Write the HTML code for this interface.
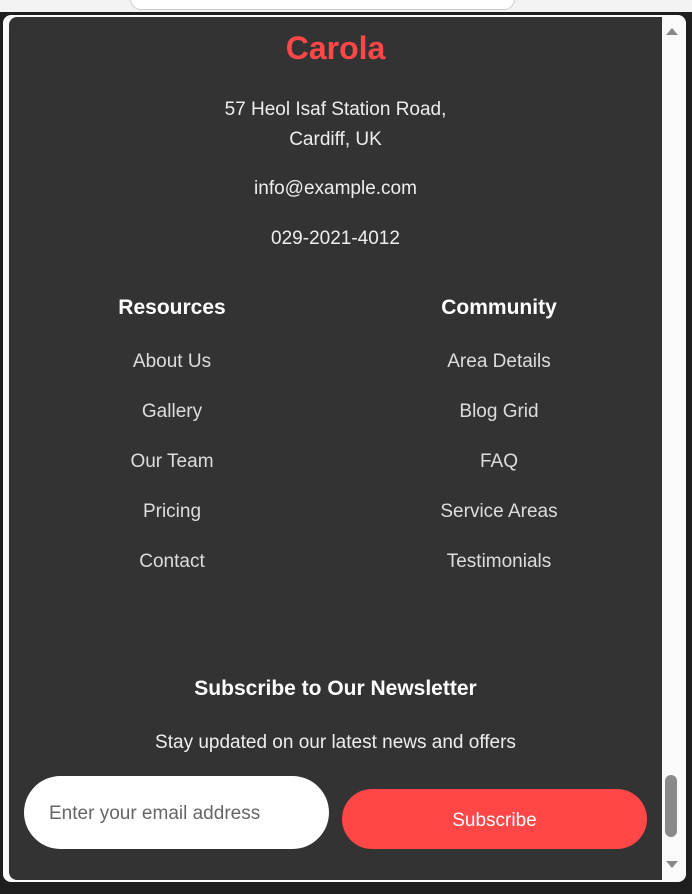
<!DOCTYPE html>
<html><head><style>
*{margin:0;padding:0;box-sizing:border-box}
body{width:692px;height:894px;background:#1e1e1e;position:relative;overflow:hidden;font-family:"Liberation Sans",sans-serif}
.top{position:absolute;left:0;top:0;width:692px;height:12px;background:#f3f3f3}
.url{position:absolute;left:130px;top:-12px;width:385px;height:22px;border:1px solid #ccc;border-radius:12px;background:#fff}
.frame{position:absolute;left:3px;top:15px;width:683px;height:867px;background:#fafafa;border-radius:8px}
.panel{position:absolute;left:9px;top:17px;width:653px;height:863px;background:#333;border-radius:8px 0 0 8px;color:#fff;text-align:center}
.sb{position:absolute;left:665px;top:775px;width:12px;height:62px;background:#8a8a8a;border-radius:6px}
.arr{position:absolute;left:666px;width:0;height:0;border-left:6px solid transparent;border-right:6px solid transparent}
.t{position:absolute;left:0;width:100%;font-size:19px;color:#eee}
.col{position:absolute;width:200px;text-align:center;font-size:19px;color:#ddd}
.col h3{font-size:21px;color:#fff;font-weight:bold;margin-bottom:0;height:54px;line-height:24px}
.col div{height:50px;line-height:24px}
</style></head><body>
<div class="top"><div class="url"></div></div>
<div class="frame"></div>
<div class="panel">
<div class="t" style="top:13px;font-size:32px;font-weight:bold;color:#ff4747">Carola</div>
<div class="t" style="top:78px;line-height:30px">57 Heol Isaf Station Road,<br>Cardiff, UK</div>
<div class="t" style="top:161px">info@example.com</div>
<div class="t" style="top:211px">029-2021-4012</div>
<div class="col" style="left:63px;top:279px"><h3>Resources</h3><div>About Us</div><div>Gallery</div><div>Our Team</div><div>Pricing</div><div>Contact</div></div>
<div class="col" style="left:390px;top:279px"><h3>Community</h3><div>Area Details</div><div>Blog Grid</div><div>FAQ</div><div>Service Areas</div><div>Testimonials</div></div>
<div class="t" style="top:660px;font-size:21px;font-weight:bold;color:#fff">Subscribe to Our Newsletter</div>
<div class="t" style="top:715px">Stay updated on our latest news and offers</div>
<div style="position:absolute;left:15px;top:759px;width:305px;height:73px;background:#fff;border-radius:37px;color:#666;font-size:19px;line-height:76px;text-align:left;padding-left:25px">Enter your email address</div>
<div style="position:absolute;left:333px;top:772px;width:305px;height:60px;background:#ff4747;border-radius:30px;color:#fff;font-size:19px;line-height:64px">Subscribe</div>
</div>
<div class="arr" style="top:28px;border-bottom:7px solid #888"></div>
<div class="arr" style="top:861px;border-top:7px solid #888"></div>
<div class="sb"></div>
</body></html>
